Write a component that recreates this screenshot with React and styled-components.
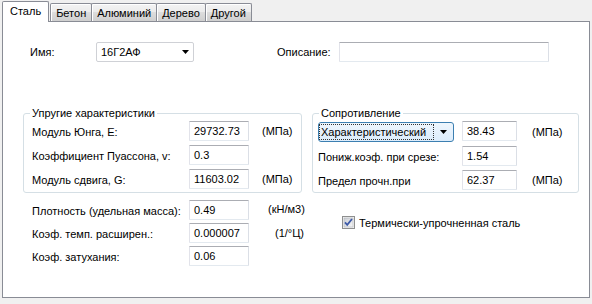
import styled, { createGlobalStyle } from 'styled-components';

const GlobalStyle = createGlobalStyle`
    html, body {
        margin : 0;
        padding : 0;
        background : #f0f0f0;
        width : 592px;
        height : 304px;
        overflow : hidden;
    }
    body {
        font-family : "Liberation Sans", Arial, sans-serif;
        font-size : 11px;
        color : #000;
    }
`;

const tabs = [ 'Сталь', 'Бетон', 'Алюминий', 'Дерево', 'Другой' ];

const elasticRows = [
    { label : 'Модуль Юнга, E:', value : '29732.73', unit : '(МПа)' },
    { label : 'Коэффициент Пуассона, v:', value : '0.3' },
    { label : 'Модуль сдвига, G:', value : '11603.02', unit : '(МПа)' },
];

const physicalRows = [
    { label : 'Плотность (удельная масса):', value : '0.49', unit : '(кН/м3)', offset : 19, lift : 3 },
    { label : 'Коэф. темп. расширен.:', value : '0.000007', unit : '(1/°Ц)', offset : 26, lift : 0 },
    { label : 'Коэф. затухания:', value : '0.06' },
];

const DropArrow = () => (
    <svg width="7" height="4" viewBox="0 0 7 4">
        <path d="M0 0 H7 L3.5 4 Z" fill="#000" />
    </svg>
);

const CheckMark = () => (
    <svg width="13" height="13" viewBox="0 0 13 13">
        <defs>
            <linearGradient id="cbBg" x1="0" y1="0" x2="1" y2="1">
                <stop offset="0" stopColor="#cbcfd5" />
                <stop offset="1" stopColor="#f7f7f7" />
            </linearGradient>
        </defs>
        <rect x="0.5" y="0.5" width="12" height="12" fill="#f4f4f4" stroke="#8e8f8f" />
        <rect x="2" y="2" width="9" height="9" fill="url(#cbBg)" stroke="#aeb3b9" strokeWidth="0.6" />
        <path d="M3 6.4 L5.2 8.8 L10 3" fill="none" stroke="#3d5aa8" strokeWidth="1.8" />
    </svg>
);

const App = () => {
    return (
        <Window>
            <GlobalStyle />
            <TabStrip>
                {tabs.map((name, index) => (
                    <Tab key={ name } $active={ index === 0 }>{ name }</Tab>
                ))}
            </TabStrip>

            <Panel>
                <TopRow>
                    <FieldLabel $width={ 66 }>Имя:</FieldLabel>
                    <ComboBox $width={ 98 }>
                        <span>16Г2АФ</span>
                        <DropArrow />
                    </ComboBox>
                    <FieldLabel $width={ 62 } $gap={ 83 }>Описание:</FieldLabel>
                    <TextBox $width={ 210 } />
                </TopRow>

                <Groups>
                    <Group $width={ 279 } $pad={ 8 }>
                        <Legend $shift={ -2 }>Упругие характеристики</Legend>
                        <FormGrid $label={ 157 } $input={ 60 } $gap={ 4 }>
                            {elasticRows.map(({ label, value, unit }) => (
                                <FormRow key={ label }>
                                    <RowLabel>{ label }</RowLabel>
                                    <TextBox $width={ 60 }>{ value }</TextBox>
                                    { unit && <Unit $offset={ 13 }>{ unit }</Unit> }
                                </FormRow>
                            ))}
                        </FormGrid>
                    </Group>

                    <Group $width={ 267 } $pad={ 5 }>
                        <Legend $shift={ 1 }>Сопротивление</Legend>
                        <FormGrid $label={ 144 } $input={ 55 } $gap={ 4 }>
                            <FormRow>
                                <FocusCombo>
                                    <FocusText>Характеристический</FocusText>
                                    <DropArrow />
                                </FocusCombo>
                                <TextBox $width={ 55 }>38.43</TextBox>
                                <Unit $offset={ 15 }>(МПа)</Unit>
                            </FormRow>
                            <FormRow>
                                <RowLabel>Пониж.коэф. при срезе:</RowLabel>
                                <TextBox $width={ 55 }>1.54</TextBox>
                            </FormRow>
                            <FormRow>
                                <RowLabel>Предел прочн.при</RowLabel>
                                <TextBox $width={ 55 }>62.37</TextBox>
                                <Unit $offset={ 15 }>(МПа)</Unit>
                            </FormRow>
                        </FormGrid>
                    </Group>
                </Groups>

                <BottomArea>
                    <FormGrid $label={ 157 } $input={ 60 } $gap={ 3 } $width={ 310 }>
                        {physicalRows.map(({ label, value, unit, offset, lift }) => (
                            <FormRow key={ label }>
                                <RowLabel>{ label }</RowLabel>
                                <TextBox $width={ 60 }>{ value }</TextBox>
                                { unit && <Unit $offset={ offset } $lift={ lift }>{ unit }</Unit> }
                            </FormRow>
                        ))}
                    </FormGrid>
                    <CheckRow>
                        <CheckMark />
                        <span>Термически-упрочненная сталь</span>
                    </CheckRow>
                </BottomArea>
            </Panel>
        </Window>
    );
};

const Window = styled.div`
    width : 592px;
    height : 304px;
`;

const TabStrip = styled.div`
    display : flex;
    align-items : flex-end;
    height : 21px;
    padding-left : 2px;
    position : relative;
    z-index : 1;
`;

const Tab = styled.div`
    box-sizing : border-box;
    display : flex;
    align-items : center;
    border : 1px solid #898c95;
    border-bottom : none;
    border-radius : 2px 2px 0 0;
    white-space : nowrap;
    height : ${({ $active }) => $active ? '21px' : '18px'};
    padding : ${({ $active }) => $active ? '0 7px 2px 7px' : '0 5px'};
    margin-bottom : ${({ $active }) => $active ? '-1px' : '0'};
    margin-left : ${({ $active }) => $active ? '0' : '-1px'};
    background : ${({ $active }) => $active
        ? '#fff'
        : 'linear-gradient(#f3f3f3, #ebebeb 50%, #dddddd 50%, #cfcfcf)'};
    box-shadow : ${({ $active }) => $active ? 'none' : 'inset 1px 1px 0 #fff'};

    &:nth-child(2) {
        margin-left : 1px;
    }
`;

const Panel = styled.div`
    box-sizing : border-box;
    margin-left : 2px;
    width : 588px;
    height : 277px;
    border : 1px solid #898c95;
    background : #fff;
`;

const TopRow = styled.div`
    display : flex;
    align-items : center;
    margin-top : 20px;
    padding-left : 27px;
`;

const FieldLabel = styled.div`
    width : ${({ $width }) => $width}px;
    margin-left : ${({ $gap }) => $gap ?? 0}px;
`;

const TextBox = styled.div`
    box-sizing : border-box;
    width : ${({ $width }) => $width}px;
    height : 20px;
    display : flex;
    align-items : center;
    padding : 0 0 1px 4px;
    background : #fff;
    border : 1px solid;
    border-color : #abadb3 #dbdfe6 #e3e9ef #e2e3ea;
    border-radius : 1px;
`;

const ComboBox = styled.div`
    box-sizing : border-box;
    width : ${({ $width }) => $width}px;
    height : 20px;
    display : flex;
    align-items : center;
    justify-content : space-between;
    padding : 0 4px 1px 4px;
    background : #fff;
    border : 1px solid #cfd1d6;
    border-radius : 2px;
`;

const Groups = styled.div`
    display : flex;
    gap : 10px;
    margin-top : 45px;
    padding-left : 20px;
`;

const Group = styled.fieldset`
    box-sizing : border-box;
    width : ${({ $width }) => $width}px;
    height : 86px;
    margin : 0;
    padding : 0 0 0 ${({ $pad }) => $pad}px;
    min-width : 0;
    border : 1px solid #d5dfe5;
    border-radius : 3px;
`;

const Legend = styled.legend`
    padding : 0 2px;
    margin-left : ${({ $shift }) => $shift}px;
    line-height : 13px;
    font-size : 11px;
`;

const FormGrid = styled.div`
    display : grid;
    grid-template-columns : ${({ $label, $input }) => `${$label}px ${$input}px auto`};
    row-gap : ${({ $gap }) => $gap}px;
    margin-top : 1px;
    width : ${({ $width }) => $width ? `${$width}px` : 'auto'};
`;

const FormRow = styled.div`
    display : contents;
`;

const RowLabel = styled.div`
    grid-column : 1;
    align-self : center;
    padding-top : 2px;
    white-space : nowrap;
`;

const Unit = styled.div`
    grid-column : 3;
    align-self : center;
    padding-left : ${({ $offset }) => $offset}px;
    margin-top : ${({ $lift }) => -($lift ?? 0)}px;
    white-space : nowrap;
`;

const FocusCombo = styled.div`
    grid-column : 1;
    box-sizing : border-box;
    width : 136px;
    height : 20px;
    margin-top : 1px;
    display : flex;
    align-items : center;
    justify-content : space-between;
    padding : 0 6px 0 1px;
    border : 1px solid #3c7fb1;
    border-radius : 3px;
    background : linear-gradient(#eef6fd, #dcecfb);
`;

const FocusText = styled.span`
    display : inline-block;
    width : 112px;
    padding : 0 0 0 1px;
    line-height : 14px;
    outline : 1px dotted #333;
    outline-offset : 0;
    white-space : nowrap;
`;

const BottomArea = styled.div`
    display : flex;
    align-items : flex-start;
    margin-top : 6px;
    padding-left : 29px;
`;

const CheckRow = styled.label`
    display : flex;
    align-items : center;
    gap : 4px;
    margin-top : 17px;

    & > svg {
        flex : none;
    }
`;

export default App;
